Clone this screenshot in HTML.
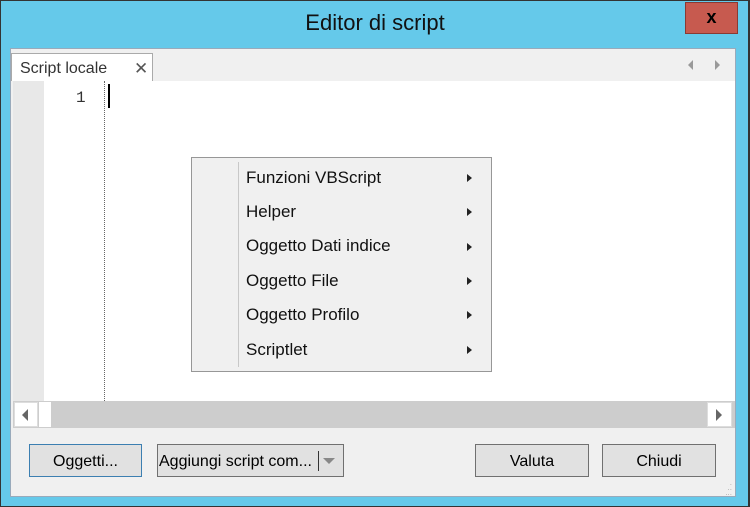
<!DOCTYPE html>
<html><head><meta charset="utf-8"><style>
*{margin:0;padding:0;box-sizing:border-box}
body{width:750px;height:507px;background:#65c9ea;position:relative;overflow:hidden;font-family:"Liberation Sans",sans-serif;font-size:15px;color:#000}
.a{position:absolute}
.btn{position:absolute;background:#e1e1e1;border:1px solid #adadad;text-align:center;line-height:33px;font-size:16px}
.mi{position:absolute;left:246px;font-size:17px;color:#111}
.ar{position:absolute;left:467px;width:0;height:0;border-left:5px solid #222;border-top:4px solid transparent;border-bottom:4px solid transparent}
</style></head><body>
<div class="a" style="left:0;top:0;width:750px;height:1px;background:#333"></div>
<div class="a" style="left:0;top:506px;width:750px;height:1px;background:#333"></div>
<div class="a" style="left:748px;top:0;width:2px;height:507px;background:#333"></div>
<div class="a" style="left:0;top:0;width:1px;height:507px;background:#333"></div>
<div class="a" style="left:0;top:10px;width:750px;text-align:center;font-size:22px;color:#111">Editor di script</div>
<div class="a" style="left:685px;top:2px;width:53px;height:32px;background:#c75a4f;border:1px solid #8a3a33;text-align:center;font-weight:bold;font-size:18px;line-height:28px">x</div>
<div class="a" style="left:10px;top:48px;width:726px;height:449px;background:#f0f0f0;border:1px solid #9ab"></div>
<div class="a" style="left:11px;top:53px;width:142px;height:28px;background:#fff;border:1px solid #aaa;border-bottom:none;padding-left:8px;line-height:29px;font-size:16px;color:#333">Script locale<span style="position:absolute;left:122px;font-size:17px;color:#555">✕</span></div>
<div class="a" style="left:688px;top:60px;border-right:5px solid #999;border-top:5px solid transparent;border-bottom:5px solid transparent"></div>
<div class="a" style="left:715px;top:60px;border-left:5px solid #999;border-top:5px solid transparent;border-bottom:5px solid transparent"></div>
<div class="a" style="left:13px;top:81px;width:722px;height:320px;background:#fff"></div>
<div class="a" style="left:13px;top:81px;width:31px;height:320px;background:#e8e8e8"></div>
<div class="a" style="left:76px;top:89px;font-family:'Liberation Mono',monospace;font-size:16px;color:#333">1</div>
<div class="a" style="left:104px;top:81px;height:320px;border-left:1px dotted #666"></div>
<div class="a" style="left:108px;top:84px;width:2px;height:24px;background:#000"></div>
<div class="a" style="left:13px;top:401px;width:722px;height:27px;background:#cdcdcd"></div>
<div class="a" style="left:14px;top:402px;width:24px;height:25px;background:#fff;border:1px solid #ddd"></div>
<div class="a" style="left:22px;top:409px;border-right:6px solid #666;border-top:6px solid transparent;border-bottom:6px solid transparent"></div>
<div class="a" style="left:39px;top:402px;width:12px;height:25px;background:#fff"></div>
<div class="a" style="left:707px;top:402px;width:25px;height:25px;background:#fff;border:1px solid #ddd"></div>
<div class="a" style="left:716px;top:409px;border-left:6px solid #666;border-top:6px solid transparent;border-bottom:6px solid transparent"></div>
<div class="btn" style="left:29px;top:444px;width:113px;height:33px;border-color:#3c7fb1">Oggetti...</div>
<div class="btn" style="left:157px;top:444px;width:187px;height:33px;border-color:#707070;text-align:left;padding-left:1px">Aggiungi script com...<span style="position:absolute;left:160px;top:6px;height:20px;border-left:1px solid #333"></span><span style="position:absolute;left:165px;top:13px;border-top:6px solid #888;border-left:6px solid transparent;border-right:6px solid transparent"></span></div>
<div class="btn" style="left:475px;top:444px;width:114px;height:33px;border-color:#707070">Valuta</div>
<div class="btn" style="left:602px;top:444px;width:114px;height:33px;border-color:#707070">Chiudi</div>
<div class="a" style="left:191px;top:157px;width:301px;height:215px;background:#f0f0f0;border:1px solid #979797"></div>
<div class="a" style="left:238px;top:162px;width:1px;height:205px;background:#c8c8c8"></div>
<div class="mi" style="top:168px">Funzioni VBScript</div><div class="ar" style="top:174px"></div>
<div class="mi" style="top:202px">Helper</div><div class="ar" style="top:208px"></div>
<div class="mi" style="top:236px">Oggetto Dati indice</div><div class="ar" style="top:243px"></div>
<div class="mi" style="top:271px">Oggetto File</div><div class="ar" style="top:277px"></div>
<div class="mi" style="top:305px">Oggetto Profilo</div><div class="ar" style="top:311px"></div>
<div class="mi" style="top:340px">Scriptlet</div><div class="ar" style="top:346px"></div>
<div class="a" style="left:718px;top:480px;width:14px;height:14px;color:#aaa;font-size:8px;line-height:5px;text-align:right">.<br>..<br>...</div>
</body></html>
